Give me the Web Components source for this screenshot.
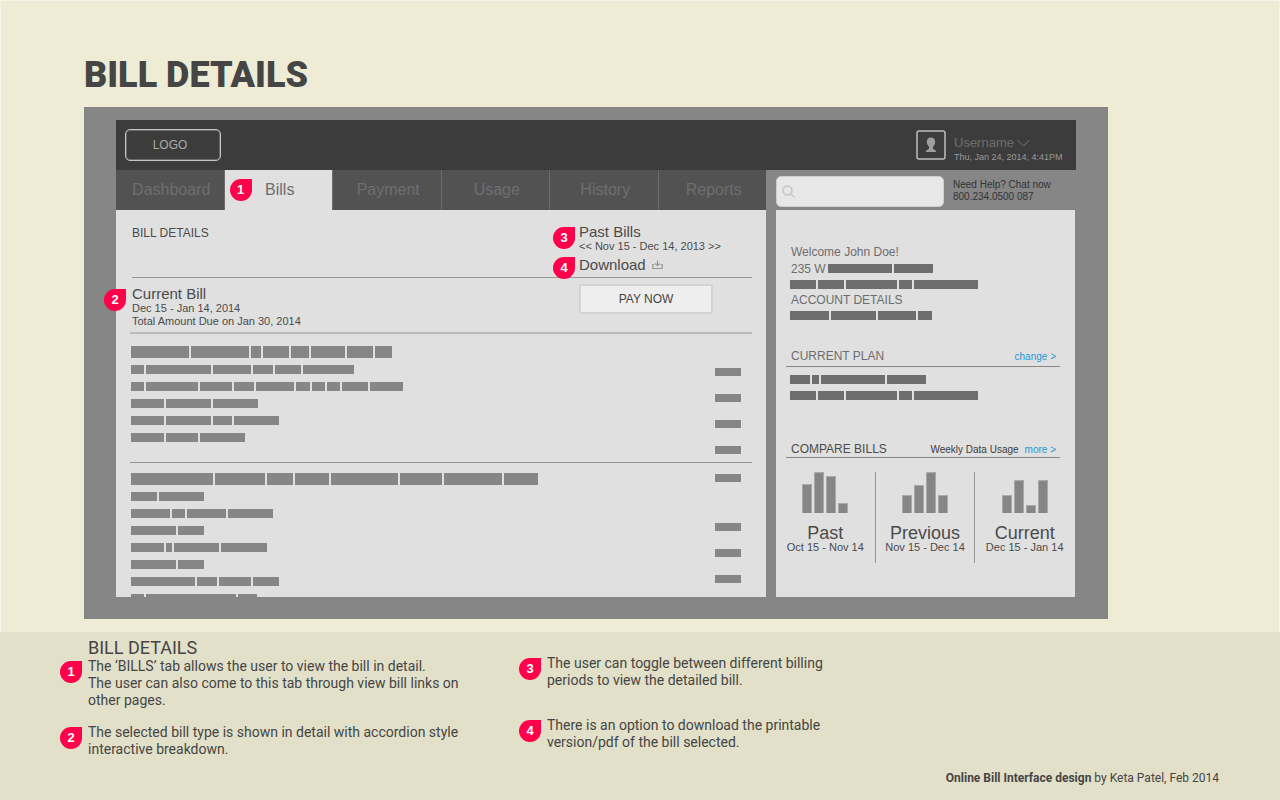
<!DOCTYPE html>
<html lang="en">
<head>
<meta charset="utf-8">
<meta name="viewport" content="width=device-width, initial-scale=1">
<title>Bill Details</title>
<style>
  html, body { margin: 0; min-height: 100%; }
  body {
    background: #e2e0c8;
    color: #454545;
    font-family: Roboto, "Liberation Sans", sans-serif;
    --ui: "Liberation Sans", Arial, sans-serif;
    --panel: #e0e0e0;
    --mid: #868686;
    --accent: #ff004b;
    --link: #1b9ad6;
  }
</style>
</head>
<body>
<spec-page></spec-page>

<script>
const define = (name, html, setup) => {
  const template = document.createElement('template');
  template.innerHTML = `<style>*{box-sizing:border-box}h1,h2,h3,p{margin:0;font-weight:400}a{color:inherit;text-decoration:none}button{font:inherit;color:inherit;background:none;border:0;padding:0;cursor:pointer}</style>${html}`;
  customElements.define(name, class extends HTMLElement {
    constructor() {
      super();
      this.attachShadow({ mode: 'open' }).append(template.content.cloneNode(true));
    }
    connectedCallback() { if (setup) setup(this, this.shadowRoot); }
  });
};

/* Numbered teardrop marker */
define('call-out', `
<style>
  :host { display: block; box-sizing: border-box; width: 22px; height: 22px; flex: none;
    background: var(--accent); border-radius: 50% 0 50% 50%; color: #fff;
    font: 700 13px/21px var(--ui); text-align: center; }
</style><slot></slot>`);

/* A line of placeholder words; "words" lists the word widths */
define('word-line', `
<style>
  :host { display: flex; gap: 2px; height: 9px; }
  :host([heading]) { height: 12px; }
  :host([cut]) { height: 3px; }
  i { background: var(--ink, #868686); }
</style>`, (host, root) => {
  for (const w of host.getAttribute('words').split(' ')) {
    const word = document.createElement('i');
    word.style.width = w + 'px';
    root.append(word);
  }
});

/* Placeholder block of a bill: lines on the left, amounts on the right */
define('bill-group', `
<style>
  :host { display: flex; justify-content: space-between; padding: 0 11px 0 1px; }
  .lines { display: flex; flex-direction: column; gap: 8px; }
  ::slotted(word-line[heading]) { margin-bottom: -1px; }
  .amounts { display: flex; flex-direction: column; gap: 18px; }
</style>
<div class="lines"><slot></slot></div>
<div class="amounts"><slot name="amounts"></slot></div>`);

define('amount-mark', `<style>:host { display: block; width: 26px; height: 8px; background: var(--mid); } :host([apart]) { margin-top: 23px; }</style>`);

define('tab-link', `
<style>
  :host { flex: 1; display: flex; border-right: 1px solid #6c6c6c; font: 16px/20px var(--ui); color: #6d6e70; background: #525252; position: relative; }
  :host(:last-of-type) { border-right: 0; }
  :host([current]) { background: var(--panel); }
  a { flex: 1; display: flex; align-items: center; justify-content: center; padding-left: 3px; }
  ::slotted(call-out) { position: absolute; left: 5px; top: 9px; }
</style><a href="#"><slot></slot></a><slot name="marker"></slot>`);

define('app-header', `
<style>
  :host { display: flex; justify-content: space-between; height: 50px; padding: 9px 8px 0 9px; background: #3c3c3c; font-family: var(--ui); }
  .logo { width: 96px; height: 32px; border: 1px solid #c4c4c4; box-shadow: inset 0 0 0 1px #6a6a6a; border-radius: 5px; color: #a9abab; font-size: 12px; line-height: 31px; text-align: center; padding-right: 6px; }
  .user { display: flex; gap: 8px; padding-top: 1px; }
  .avatar { display: block; width: 30px; height: 30px; }
  .text { width: 114px; }
  .name { display: flex; align-items: center; gap: 3px; margin-top: 5px; font-size: 13px; line-height: 15px; color: #6d6e70; }
  .date { font-size: 9px; line-height: 14px; color: #999; white-space: nowrap; }
</style>
<a class="logo" href="#">LOGO</a>
<div class="user">
  <svg class="avatar" viewBox="0 0 30 30" aria-hidden="true"><rect x="1" y="1" width="28" height="28" rx="2" fill="none" stroke="#bdbdbd" stroke-width="1.5"/><path d="M15 7.500c2.800 0 4.300 1.900 4.200 4.500-.1 2.200-1 3.700-2.200 4.700v1.900c.4 1.300 3 1 3 3.400H10c0-2.400 2.600-2.100 3-3.400v-1.900c-1.200-1-2.100-2.500-2.200-4.700C10.700 9.400 12.200 7.500 15 7.500z" fill="#9c9ea2"/></svg>
  <div class="text">
    <button class="name">Username <svg width="13" height="8" viewBox="0 0 13 8" aria-hidden="true"><path d="M.5 1l6 6 6-6" fill="none" stroke="#77787a"/></svg></button>
    <div class="date">Thu, Jan 24, 2014, 4:41PM</div>
  </div>
</div>`);

define('help-bar', `
<style>
  :host { display: flex; gap: 9px; height: 40px; padding-top: 6px; font: 10px/12px var(--ui); color: #333; }
  label { display: flex; align-items: center; width: 168px; height: 31px; flex: none; padding-left: 5px; gap: 4px; background: #e7e7e7; border: 1px solid #cfcfcf; border-radius: 5px; }
  input { flex: 1; min-width: 0; height: 26px; border: 0; background: none; outline: 0; font: 12px var(--ui); }
  p { padding-top: 3px; }
</style>
<label><svg width="13" height="13" viewBox="0 0 13 13" aria-hidden="true"><g fill="none" stroke="#c6c6c6" stroke-width="1.500"><circle cx="5.500" cy="5.500" r="4.500"/><path d="M9 9l3.500 3.500"/></g></svg><input type="search" aria-label="Search"></label>
<p>Need Help? Chat now<br>800.234.0500 087</p>`);

define('bill-panel', `
<style>
  :host { display: block; background: var(--panel); padding: 0 14px; font: 11px/13px var(--ui); color: #4b4b4b; }
  .row { display: grid; grid-template-columns: 1fr 173px; margin-left: 2px; }
  .head { height: 68px; border-bottom: 1px solid #969696; }
  .head h1 { font-size: 12px; line-height: 16px; padding-top: 15px; }
  h2 { font-size: 15px; line-height: 16px; }
  .tools { padding-top: 14px; }
  .spot { position: relative; display: block; }
  .spot call-out { position: absolute; left: -26px; top: 3px; }
  .spot.now call-out { left: -28px; }
  .download { margin-top: 4px; display: flex; gap: 6px; align-items: center; }
  .download > call-out { top: 0; }
  .due { height: 54px; padding-top: 8px; }
  .pay { width: 134px; height: 30px; margin-top: -2px; border: 2px solid #d3d3d3; border-radius: 2px; background: #eee; font-size: 12px; line-height: 24px; color: #444; }
  bill-group { border-top: 1px solid #969696; padding-top: 10px; }
  bill-group.first { border-top: 2px solid #b9b9b9; padding-top: 12px; padding-bottom: 8px; }
  .first amount-mark:first-of-type { margin-top: 22px; }
  .next amount-mark:first-of-type { margin-top: 1px; }
</style>
<div class="row head">
  <h1>BILL DETAILS</h1>
  <div class="tools">
    <div class="spot"><call-out>3</call-out><h2>Past Bills</h2><button aria-label="Previous period">&lt;&lt;</button> Nov 15 - Dec 14, 2013 <button aria-label="Next period">&gt;&gt;</button></div>
    <a class="spot download" href="#"><call-out>4</call-out><h2>Download</h2><svg width="11" height="10" viewBox="0 0 11 10" aria-hidden="true"><path d="M2.300 4.500H.8v4h9.400v-4H8.700M5.500.5V5M3.300 3.500l2.200 2.200 2.200-2.200" fill="none" stroke="#999" stroke-width="1.200"/></svg></a>
  </div>
</div>
<div class="row due">
  <div class="spot now"><call-out>2</call-out><h2>Current Bill</h2><p>Dec 15 - Jan 14, 2014</p><p>Total Amount Due on Jan 30, 2014</p></div>
  <button class="pay">PAY NOW</button>
</div>
<bill-group class="first">
  <word-line heading words="58 58 10 26 18 34 26 17"></word-line>
  <word-line words="13 65 38 20 26 51"></word-line>
  <word-line words="13 52 32 20 38 14 13 13 26 33"></word-line>
  <word-line words="33 45 45"></word-line>
  <word-line words="33 45 19 45"></word-line>
  <word-line words="33 32 45"></word-line>
  <amount-mark slot="amounts"></amount-mark><amount-mark slot="amounts"></amount-mark><amount-mark slot="amounts"></amount-mark><amount-mark slot="amounts"></amount-mark>
</bill-group>
<bill-group class="next">
  <word-line heading words="82 50 26 34 67 42 58 34"></word-line>
  <word-line words="26 45"></word-line>
  <word-line words="39 13 39 45"></word-line>
  <word-line words="45 26"></word-line>
  <word-line words="33 6 45 46"></word-line>
  <word-line words="45 26"></word-line>
  <word-line words="64 20 32 26"></word-line>
  <word-line cut words="13 90 19"></word-line>
  <amount-mark slot="amounts"></amount-mark><amount-mark apart slot="amounts"></amount-mark><amount-mark slot="amounts"></amount-mark><amount-mark slot="amounts"></amount-mark>
</bill-group>`);

/* Small bar chart with a caption; "bars" lists the bar heights */
define('usage-chart', `
<style>
  :host { flex: 1; display: flex; flex-direction: column; align-items: center; height: 91px; border-left: 1px solid #979797; font: 11px/12px var(--ui); color: #4b4b4b; white-space: nowrap; }
  :host(:first-of-type) { border-left: 0; }
  .bars { display: flex; align-items: flex-end; gap: 2px; height: 41px; }
  i { width: 10px; background: var(--mid); border: 1px solid #a9a9a9; border-bottom: 0; }
  h3 { font-size: 18px; line-height: 20px; margin-top: 10px; }
  p { margin-top: -2px; }
</style>
<div class="bars"></div><h3><slot></slot></h3><p><slot name="period"></slot></p>`, (host, root) => {
  const bars = root.querySelector('.bars');
  for (const h of host.getAttribute('bars').split(' ')) {
    const bar = document.createElement('i');
    bar.style.height = h + 'px';
    bars.append(bar);
  }
});

define('side-title', `
<style>
  :host { display: flex; align-items: baseline; height: 20px; margin: 0 15px 0 10px; padding: 1px 4px 0 5px; border-bottom: 1px solid #868686; font: 12px/16px var(--ui); box-sizing: border-box; }
  h2 { flex: 1; font-size: 12px; line-height: 16px; }
</style><h2><slot></slot></h2><slot name="extra"></slot>`);

define('account-panel', `
<style>
  :host { display: block; background: var(--panel); font: 12px/16px var(--ui); color: #6d6d6d; --ink: #6e6e6e; }
  .who { padding: 34px 14px 0; height: 137px; }
  .who p { padding-left: 1px; }
  .address { display: flex; align-items: center; gap: 2px; height: 17px; }
  .address + word-line { margin-top: 3px; }
  .who word-line + p { margin-top: 3px; }
  .who > p + word-line { margin-top: 3px; }
  .plan { padding: 8px 14px 0; height: 73px; }
  .plan word-line + word-line { margin-top: 7px; }
  .compare { color: #4b4b4b; height: 18px; }
  side-title a { font-size: 10px; color: var(--link); }
  side-title span { font-size: 10px; color: #3c3c3c; margin-right: 6px; }
  .charts { display: flex; padding: 14px 1px 0 0; }
  .charts span { font-size: 11px; }
</style>
<div class="who">
  <p>Welcome John Doe!</p>
  <div class="address"><p>235 W</p><word-line words="64 39"></word-line></div>
  <word-line words="26 26 51 13 64"></word-line>
  <p>ACCOUNT DETAILS</p>
  <word-line words="39 45 38 14"></word-line>
</div>
<side-title>CURRENT PLAN<a slot="extra" href="#">change &gt;</a></side-title>
<div class="plan">
  <word-line words="20 7 64 39"></word-line>
  <word-line words="26 26 51 13 64"></word-line>
</div>
<side-title class="compare">COMPARE BILLS<span slot="extra">Weekly Data Usage</span><a slot="extra" href="#">more &gt;</a></side-title>
<div class="charts">
  <usage-chart bars="29 41 37 10">Past<span slot="period">Oct 15 - Nov 14</span></usage-chart>
  <usage-chart bars="18 28 41 18">Previous<span slot="period">Nov 15 - Dec 14</span></usage-chart>
  <usage-chart bars="18 33 8 33">Current<span slot="period">Dec 15 - Jan 14</span></usage-chart>
</div>`);

define('bill-app', `
<style>
  :host { display: block; background: var(--mid); padding: 13px 32px 22px; }
  .grid { display: grid; grid-template-columns: minmax(0, 1fr) 299px; column-gap: 10px; padding-right: 1px; }
  nav { display: flex; height: 40px; }
</style>
<app-header></app-header>
<div class="grid">
  <nav aria-label="Sections">
    <tab-link>Dashboard</tab-link>
    <tab-link current>Bills<call-out slot="marker">1</call-out></tab-link>
    <tab-link>Payment</tab-link>
    <tab-link>Usage</tab-link>
    <tab-link>History</tab-link>
    <tab-link>Reports</tab-link>
  </nav>
  <help-bar></help-bar>
  <bill-panel></bill-panel>
  <account-panel></account-panel>
</div>`);

define('spec-note', `
<style>
  :host { display: flex; gap: 6px; font-size: 14px; line-height: 17px; }
  ::slotted(call-out) { margin-top: 3px; }
</style><slot name="marker"></slot><p><slot></slot></p>`);

define('spec-page', `
<style>
  :host { display: block; }
  .stage { background: #eeecd4; border: 1px solid #f5f4e6; border-bottom: 0; padding: 52px 171px 13px 83px; }
  .title { font-size: 36px; line-height: 44px; font-weight: 900; margin-bottom: 10px; }
  .notes { display: grid; grid-template-columns: 400px 310px; column-gap: 59px; padding: 6px 60px 0; }
  .notes h2 { font-size: 18px; line-height: 20px; padding-left: 28px; }
  .notes spec-note + spec-note { margin-top: 15px; }
  .second { padding-top: 17px; }
  .second spec-note + spec-note { margin-top: 28px; }
  footer { text-align: right; padding: 12px 61px 10px; font-size: 12px; line-height: 17px; }
</style>
<section class="stage">
  <h1 class="title">BILL DETAILS</h1>
  <bill-app></bill-app>
</section>
<section class="notes">
  <div>
    <h2>BILL DETAILS</h2>
    <spec-note><call-out slot="marker">1</call-out>The ‘BILLS’ tab allows the user to view the bill in detail.<br>The user can also come to this tab through view bill links on other pages.</spec-note>
    <spec-note><call-out slot="marker">2</call-out>The selected bill type is shown in detail with accordion style interactive breakdown.</spec-note>
  </div>
  <div class="second">
    <spec-note><call-out slot="marker">3</call-out>The user can toggle between different billing periods to view the detailed bill.</spec-note>
    <spec-note><call-out slot="marker">4</call-out>There is an option to download the printable version/pdf of the bill selected.</spec-note>
  </div>
</section>
<footer><b>Online Bill Interface design</b> by Keta Patel, Feb 2014</footer>`);
</script>
</body>
</html>
